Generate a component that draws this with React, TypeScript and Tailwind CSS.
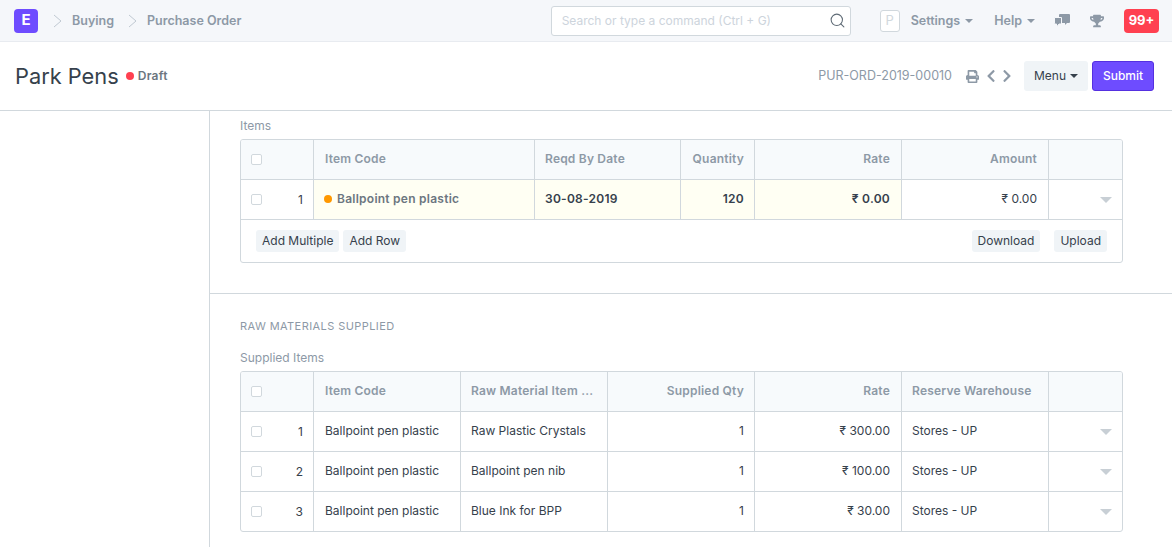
import { Search } from 'lucide-react'
import { FaChevronLeft, FaChevronRight, FaPrint, FaTrophy } from 'react-icons/fa'

const TABLE_COLS = 'grid-cols-[73px_221px_146px_74px_147px_147px_1fr]'
const RAW_COLS = 'grid-cols-[73px_147px_147px_147px_147px_147px_1fr]'

type Cell = {
  text: string
  right?: boolean
  // rate and amount columns sit 1px further in than the quantity ones
  inset?: boolean
  bold?: boolean
  tint?: boolean
  dot?: boolean
  lead?: boolean
}

function Caret({ className }: { className: string }) {
  return <span className={`inline-block h-0 w-0 border-x-[4px] border-t-[4px] border-x-transparent ${className}`} />
}

function Checkbox() {
  return <span className="block h-[11px] w-[11px] rounded-[2px] border border-[#d1d8dd] bg-white" />
}

function Crumb({ label }: { label: string }) {
  return (
    <div className="flex items-center gap-[10px]">
      <svg width="9" height="14" viewBox="0 0 9 14" fill="none" className="text-[#c0c9d2]">
        <path d="M1 1l7 6-7 6" stroke="currentColor" strokeWidth="1" />
      </svg>
      <span className="pt-[2px] text-[12.5px] font-semibold text-[#8d99a6]">{label}</span>
    </div>
  )
}

function CommentsIcon() {
  return (
    <svg width="16" height="14" viewBox="0 0 16 14" className="ml-[19px] text-[#8d99a6]">
      <path fill="currentColor" d="M6 0h9a1 1 0 0 1 1 1v7a1 1 0 0 1-1 1h-2l-2 2V9H6a1 1 0 0 1-1-1V1a1 1 0 0 1 1-1z" />
      <path fill="currentColor" stroke="#f5f7fa" strokeWidth="1" d="M1 3.5h6.5V10H5l-2.5 3v-3H1a.5.5 0 0 1-.5-.5v-5.500a.5.5 0 0 1 .5-.5z" />
    </svg>
  )
}

function NavBar() {
  return (
    <header className="flex h-[42px] items-center border-b border-[#e8ebf0] bg-[#f5f7fa] pl-[14px] pr-[13px]">
      <div className="flex h-6 w-6 items-center justify-center rounded-[4px] bg-[#6e4cff] text-[15px] font-bold text-white">E</div>
      <div className="ml-[15px] flex items-center gap-[14px]">
        <Crumb label="Buying" />
        <Crumb label="Purchase Order" />
      </div>
      <div className="ml-auto flex h-[30px] w-[300px] items-center justify-between rounded-[3px] border border-[#d1d8dd] bg-white pl-[10px] pr-[4px]">
        <span className="text-[12px] text-[#cdd4dc]">Search or type a command (Ctrl + G)</span>
        <Search size={17} strokeWidth={1.5} className="text-[#5f6b76]" />
      </div>
      <div className="ml-[29px] flex h-[22px] w-[20px] items-center justify-center rounded-[3px] border border-[#d1d8dd] bg-white text-[13px] text-[#d1d8dd]">P</div>
      <div className="ml-[11px] flex items-center gap-[5px] pt-[1px] text-[12.5px] font-semibold text-[#8d99a6]">
        Settings <Caret className="border-t-[#8d99a6]" />
      </div>
      <div className="ml-[21px] flex items-center gap-[5px] pt-[1px] text-[12.5px] font-semibold text-[#8d99a6]">
        Help <Caret className="border-t-[#8d99a6]" />
      </div>
      <CommentsIcon />
      <FaTrophy size={14} className="ml-[20px] text-[#8d99a6]" />
      <div className="ml-[20px] flex h-6 w-[35px] items-center justify-center rounded-[4px] bg-[#ff4050] text-[13px] font-bold text-white">99+</div>
    </header>
  )
}

function PageHead() {
  return (
    <div className="flex h-[69px] items-center border-b border-[#d1d8dd] bg-white pl-[15px] pr-[18px]">
      <h1 className="text-[21.8px] font-normal text-[#36414c]">Park Pens</h1>
      <span className="ml-[7px] h-2 w-2 rounded-full bg-[#ff4050]" />
      <span className="ml-1 text-[12px] font-semibold tracking-[0.3px] text-[#6c7680]">Draft</span>
      <span className="ml-auto text-[12.5px] text-[#8d99a6]">PUR-ORD-2019-00010</span>
      <FaPrint size={13} className="ml-[14px] text-[#8d99a6]" />
      <FaChevronLeft size={14} className="ml-[5px] text-[#8d99a6]" />
      <FaChevronRight size={14} className="ml-[2px] text-[#8d99a6]" />
      <button className="ml-[10px] flex h-[30px] w-[64px] items-center justify-center gap-1 rounded-[3px] bg-[#f0f4f7] text-[12px] text-[#36414c]">
        Menu <Caret className="border-t-[#36414c]" />
      </button>
      <button className="ml-1 h-[30px] w-[62px] rounded-[3px] border border-[#5530e0] bg-[#6e4cff] text-[12px] font-medium text-white">Submit</button>
    </div>
  )
}

function HeaderRow({ cols, labels }: { cols: string; labels: Cell[] }) {
  return (
    <div className={`grid h-10 ${cols} border-b border-[#d1d8dd] bg-[#f7fafc]`}>
      <div className="flex items-center border-r border-[#d1d8dd] pl-[10px]">
        <Checkbox />
      </div>
      {labels.map((c) => (
        <div
          key={c.text}
          className={`flex items-center border-r border-[#d1d8dd] pb-[2px] text-[12px] font-semibold tracking-[0.2px] text-[#8d99a6] ${c.lead ? 'pl-[11px]' : 'pl-[10px]'} ${c.inset ? 'pr-[11px]' : 'pr-[10px]'} ${c.right ? 'justify-end' : ''}`}
        >
          {c.text}
        </div>
      ))}
      <div />
    </div>
  )
}

function BodyRow({ cols, index, cells, last }: { cols: string; index: number; cells: Cell[]; last?: boolean }) {
  return (
    <div className={`grid ${cols} ${last ? 'h-[39px]' : 'h-10 border-b border-[#d1d8dd]'}`}>
      <div className="flex items-center justify-between border-r border-[#d1d8dd] px-[10px] text-[12px] text-[#36414c]">
        <Checkbox />
        <span>{index}</span>
      </div>
      {cells.map((c, i) => (
        <div
          key={i}
          className={`flex items-center border-r border-[#d1d8dd] pb-[1px] text-[12px] ${c.lead ? 'pl-[11px]' : 'pl-[10px]'} ${c.inset ? 'pr-[11px]' : 'pr-[10px]'} ${c.right ? 'justify-end' : ''} ${c.bold ? 'font-semibold tracking-[0.25px]' : ''} ${c.dot ? 'text-[#6c7680]' : 'text-[#36414c]'} ${c.tint ? 'bg-[#fffff3]' : ''}`}
        >
          {c.dot ? <span className="mr-[5px] h-2 w-2 rounded-full bg-[#ff9800]" /> : null}
          {c.text}
        </div>
      ))}
      <div className="flex items-center justify-end pr-[10px]">
        <span className="inline-block h-0 w-0 border-x-[6px] border-t-[6px] border-x-transparent border-t-[#c8cfd5]" />
      </div>
    </div>
  )
}

function SmallButton({ label }: { label: string }) {
  return <button className="flex h-[22px] items-center rounded-[3px] bg-[#f0f4f7] px-[6px] text-[12px] text-[#36414c]">{label}</button>
}

const rawRows = [
  { material: 'Raw Plastic Crystals', rate: '₹ 300.00' },
  { material: 'Ballpoint pen nib', rate: '₹ 100.00' },
  { material: 'Blue Ink for BPP', rate: '₹ 30.00' },
]

export default function App() {
  return (
    <div className="h-[547px] w-[1172px] overflow-hidden bg-white font-['Inter',sans-serif]">
      <NavBar />
      <PageHead />
      <div className="flex">
        <aside className="w-[209px] shrink-0" />
        <main className="h-[436px] flex-1 border-l border-[#d1d8dd]">
          <section className="border-b border-[#d1d8dd] pb-[30px] pl-[30px] pr-[49px] pt-[7px]">
            <div className="mb-[6px] h-[15px] text-[12px] leading-[15px] text-[#8d99a6]">Items</div>
            <div className="overflow-hidden rounded-[3px] border border-[#d1d8dd]">
              <HeaderRow
                cols={TABLE_COLS}
                labels={[
                  { text: 'Item Code', lead: true },
                  { text: 'Reqd By Date' },
                  { text: 'Quantity', right: true },
                  { text: 'Rate', right: true, inset: true },
                  { text: 'Amount', right: true, inset: true },
                ]}
              />
              <BodyRow
                cols={TABLE_COLS}
                index={1}
                cells={[
                  { text: 'Ballpoint pen plastic', bold: true, tint: true, dot: true },
                  { text: '30-08-2019', bold: true, tint: true },
                  { text: '120', bold: true, tint: true, right: true },
                  { text: '₹ 0.00', bold: true, tint: true, right: true, inset: true },
                  { text: '₹ 0.00', right: true, inset: true },
                ]}
              />
              <div className="flex h-[42px] items-center gap-1 pb-[1px] pl-[15px] pr-[15px]">
                <SmallButton label="Add Multiple" />
                <SmallButton label="Add Row" />
                <div className="ml-auto flex gap-[14px]">
                  <SmallButton label="Download" />
                  <SmallButton label="Upload" />
                </div>
              </div>
            </div>
          </section>
          <section className="pl-[30px] pr-[49px] pt-[25px]">
            <div className="h-[14px] text-[11px] leading-[14px] tracking-[0.42px] text-[#8d99a6]">RAW MATERIALS SUPPLIED</div>
            <div className="mb-[6px] mt-[17px] h-[15px] text-[12px] leading-[15px] text-[#8d99a6]">Supplied Items</div>
            <div className="overflow-hidden rounded-[3px] border border-[#d1d8dd]">
              <HeaderRow
                cols={RAW_COLS}
                labels={[
                  { text: 'Item Code', lead: true },
                  { text: 'Raw Material Item ...' },
                  { text: 'Supplied Qty', right: true },
                  { text: 'Rate', right: true, inset: true },
                  { text: 'Reserve Warehouse' },
                ]}
              />
              {rawRows.map((r, i) => (
                <BodyRow
                  key={r.material}
                  cols={RAW_COLS}
                  index={i + 1}
                  last={i === rawRows.length - 1}
                  cells={[
                    { text: 'Ballpoint pen plastic', lead: true },
                    { text: r.material },
                    { text: '1', right: true },
                    { text: r.rate, right: true, inset: true },
                    { text: 'Stores - UP' },
                  ]}
                />
              ))}
            </div>
          </section>
        </main>
      </div>
    </div>
  )
}
